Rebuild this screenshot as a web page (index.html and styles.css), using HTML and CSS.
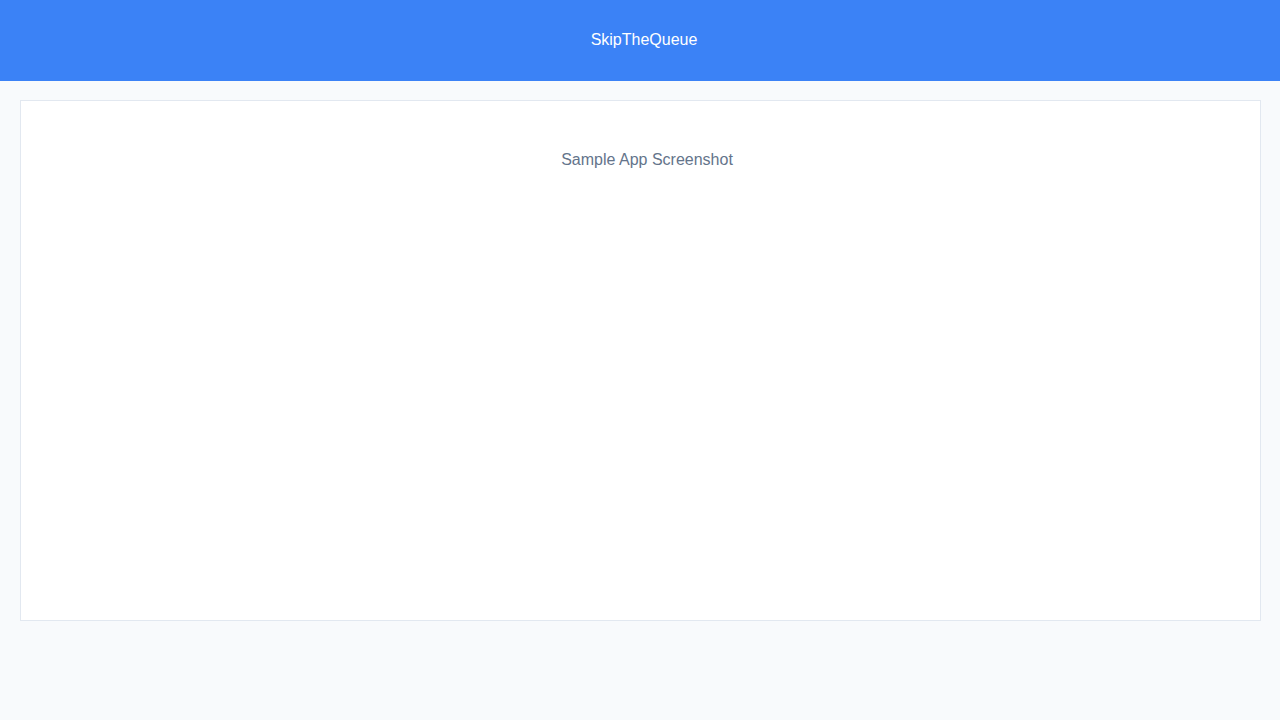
FILE: index.html
```html
<!DOCTYPE html>
<html>
<head>
<meta charset="utf-8">
<link rel="stylesheet" href="styles.css">
</head>
<body>
<header class="topbar"><span class="brand">SkipTheQueue</span></header>
<main class="content">
  <section class="card">
    <p class="caption">Sample App Screenshot</p>
  </section>
</main>
</body>
</html>
```
FILE: styles.css
```css
html, body {
  margin: 0;
  padding: 0;
}
body {
  background: #f8fafc;
  font-family: "Liberation Sans", Arial, sans-serif;
  font-size: 16px;
  height: 720px;
}
.topbar {
  height: 81px;
  background: #3b82f6;
  color: #ffffff;
  display: flex;
  align-items: center;
  justify-content: center;
  padding-left: 8px;
  padding-bottom: 2px;
  box-sizing: border-box;
}
.brand {
  line-height: 18px;
}
.content {
  padding: 19px 19px 20px 20px;
}
.card {
  background: #ffffff;
  border: 1px solid #e2e8f0;
  height: 469px;
  box-sizing: content-box;
  padding-top: 50px;
  display: flex;
  flex-direction: column;
  align-items: center;
}
.caption {
  margin: 0;
  color: #64748b;
  line-height: 18px;
  padding-left: 13px;
}
```
